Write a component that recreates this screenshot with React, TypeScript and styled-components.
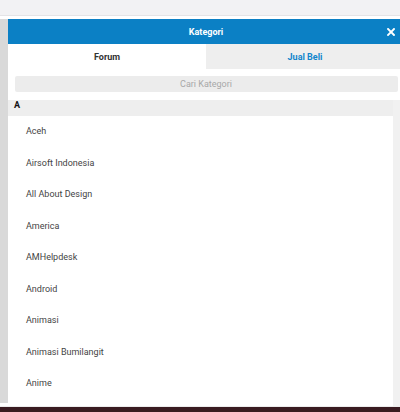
import React from 'react';
import styled, { createGlobalStyle } from 'styled-components';

const color = {
  blue: '#0b80c5',
  blueText: '#1285cc',
  tabGray: '#eeeeee',
  searchGray: '#ececec',
  sectionGray: '#eeeeee',
  text: '#444444',
  dark: '#3a1b21',
};

const GlobalStyle = createGlobalStyle`
  html, body {
    margin: 0;
    padding: 0;
    background: #ffffff;
    overflow: hidden;
  }
  body {
    font-family: Roboto, 'Noto Sans', Arial, sans-serif;
  }
`;

const Page = styled.div`
  display: flex;
  flex-direction: column;
  width: 400px;
  height: 412px;
  overflow: hidden;
`;

const TopBar = styled.div`
  flex-shrink: 0;
  height: 15px;
  margin-bottom: 3px;
  background: #f2f2f4;
  border-bottom: 1px solid #e4e4e6;
`;

const Main = styled.div`
  display: flex;
  flex-shrink: 0;
  height: 387px;
`;

const Gutter = styled.div`
  flex-shrink: 0;
  width: 8px;
  margin-bottom: 3px;
  background: #d9d9d9;
`;

const Modal = styled.div`
  display: flex;
  flex-direction: column;
  flex-shrink: 0;
  width: 396px;
  background: #ffffff;
`;

const Header = styled.div`
  display: grid;
  grid-template-columns: 1fr auto 1fr;
  align-items: center;
  height: 25px;
  background: ${color.blue};
  color: #ffffff;
`;

const Title = styled.div`
  grid-column: 2;
  font-size: 9px;
  font-weight: bold;
`;

const CloseButton = styled.button`
  justify-self: end;
  display: flex;
  align-items: center;
  justify-content: center;
  width: 8px;
  height: 8px;
  margin-right: 9px;
  padding: 0;
  border: none;
  background: none;
  cursor: pointer;
`;

const Tabs = styled.div`
  display: grid;
  grid-template-columns: 1fr 1fr;
  height: 25px;
`;

const Tab = styled.div<{ $active?: boolean }>`
  display: flex;
  align-items: center;
  justify-content: center;
  font-size: 9px;
  font-weight: bold;
  color: ${(p) => (p.$active ? '#333333' : color.blueText)};
  background: ${(p) => (p.$active ? '#ffffff' : color.tabGray)};
`;

const SearchWrap = styled.div`
  padding: 7px 6.5px 8px;
`;

const SearchInput = styled.input`
  display: block;
  box-sizing: border-box;
  width: 100%;
  height: 16px;
  padding: 0;
  border: none;
  border-radius: 2px;
  background: ${color.searchGray};
  font-family: Roboto, 'Noto Sans', Arial, sans-serif;
  font-size: 9px;
  text-align: center;
  outline: none;

  &::placeholder {
    color: #a8a8a8;
  }
`;

const ListArea = styled.div`
  display: flex;
  flex: 1;
  min-height: 0;
`;

const List = styled.div`
  flex: 1;
  overflow: hidden;
`;

const ScrollTrack = styled.div`
  flex-shrink: 0;
  width: 11px;
  background: #f1f1f1;
`;

const SectionHeader = styled.div`
  height: 16px;
  padding: 0 6px;
  background: ${color.sectionGray};
  font-size: 9px;
  font-weight: bold;
  line-height: 10px;
  color: #111111;
`;

const Item = styled.div`
  height: 31.5px;
  padding-left: 18px;
  font-size: 9px;
  line-height: 31.5px;
  color: ${color.text};
`;

const FooterLine = styled.div`
  flex-shrink: 0;
  height: 1px;
  background: #ececec;
`;

const Footer = styled.div`
  flex: 1;
  background: ${color.dark};
`;

const categories = [
  'Aceh',
  'Airsoft Indonesia',
  'All About Design',
  'America',
  'AMHelpdesk',
  'Android',
  'Animasi',
  'Animasi Bumilangit',
  'Anime',
];

const App: React.FC = () => {
  return (
    <Page>
      <GlobalStyle />
      <TopBar />
      <Main>
        <Gutter />
        <Modal>
          <Header>
            <Title>Kategori</Title>
            <CloseButton aria-label='Tutup'>
              <svg width='8' height='8' viewBox='0 0 8 8'>
                <path d='M1 1L7 7M7 1L1 7' stroke='#ffffff' strokeWidth='1.9' strokeLinecap='square' />
              </svg>
            </CloseButton>
          </Header>
          <Tabs>
            <Tab $active>Forum</Tab>
            <Tab>Jual Beli</Tab>
          </Tabs>
          <SearchWrap>
            <SearchInput placeholder='Cari Kategori' />
          </SearchWrap>
          <ListArea>
            <List>
              <SectionHeader>A</SectionHeader>
              {categories.map((name) => (
                <Item key={name}>{name}</Item>
              ))}
            </List>
            <ScrollTrack />
          </ListArea>
        </Modal>
      </Main>
      <FooterLine />
      <Footer />
    </Page>
  );
};

export default App;
